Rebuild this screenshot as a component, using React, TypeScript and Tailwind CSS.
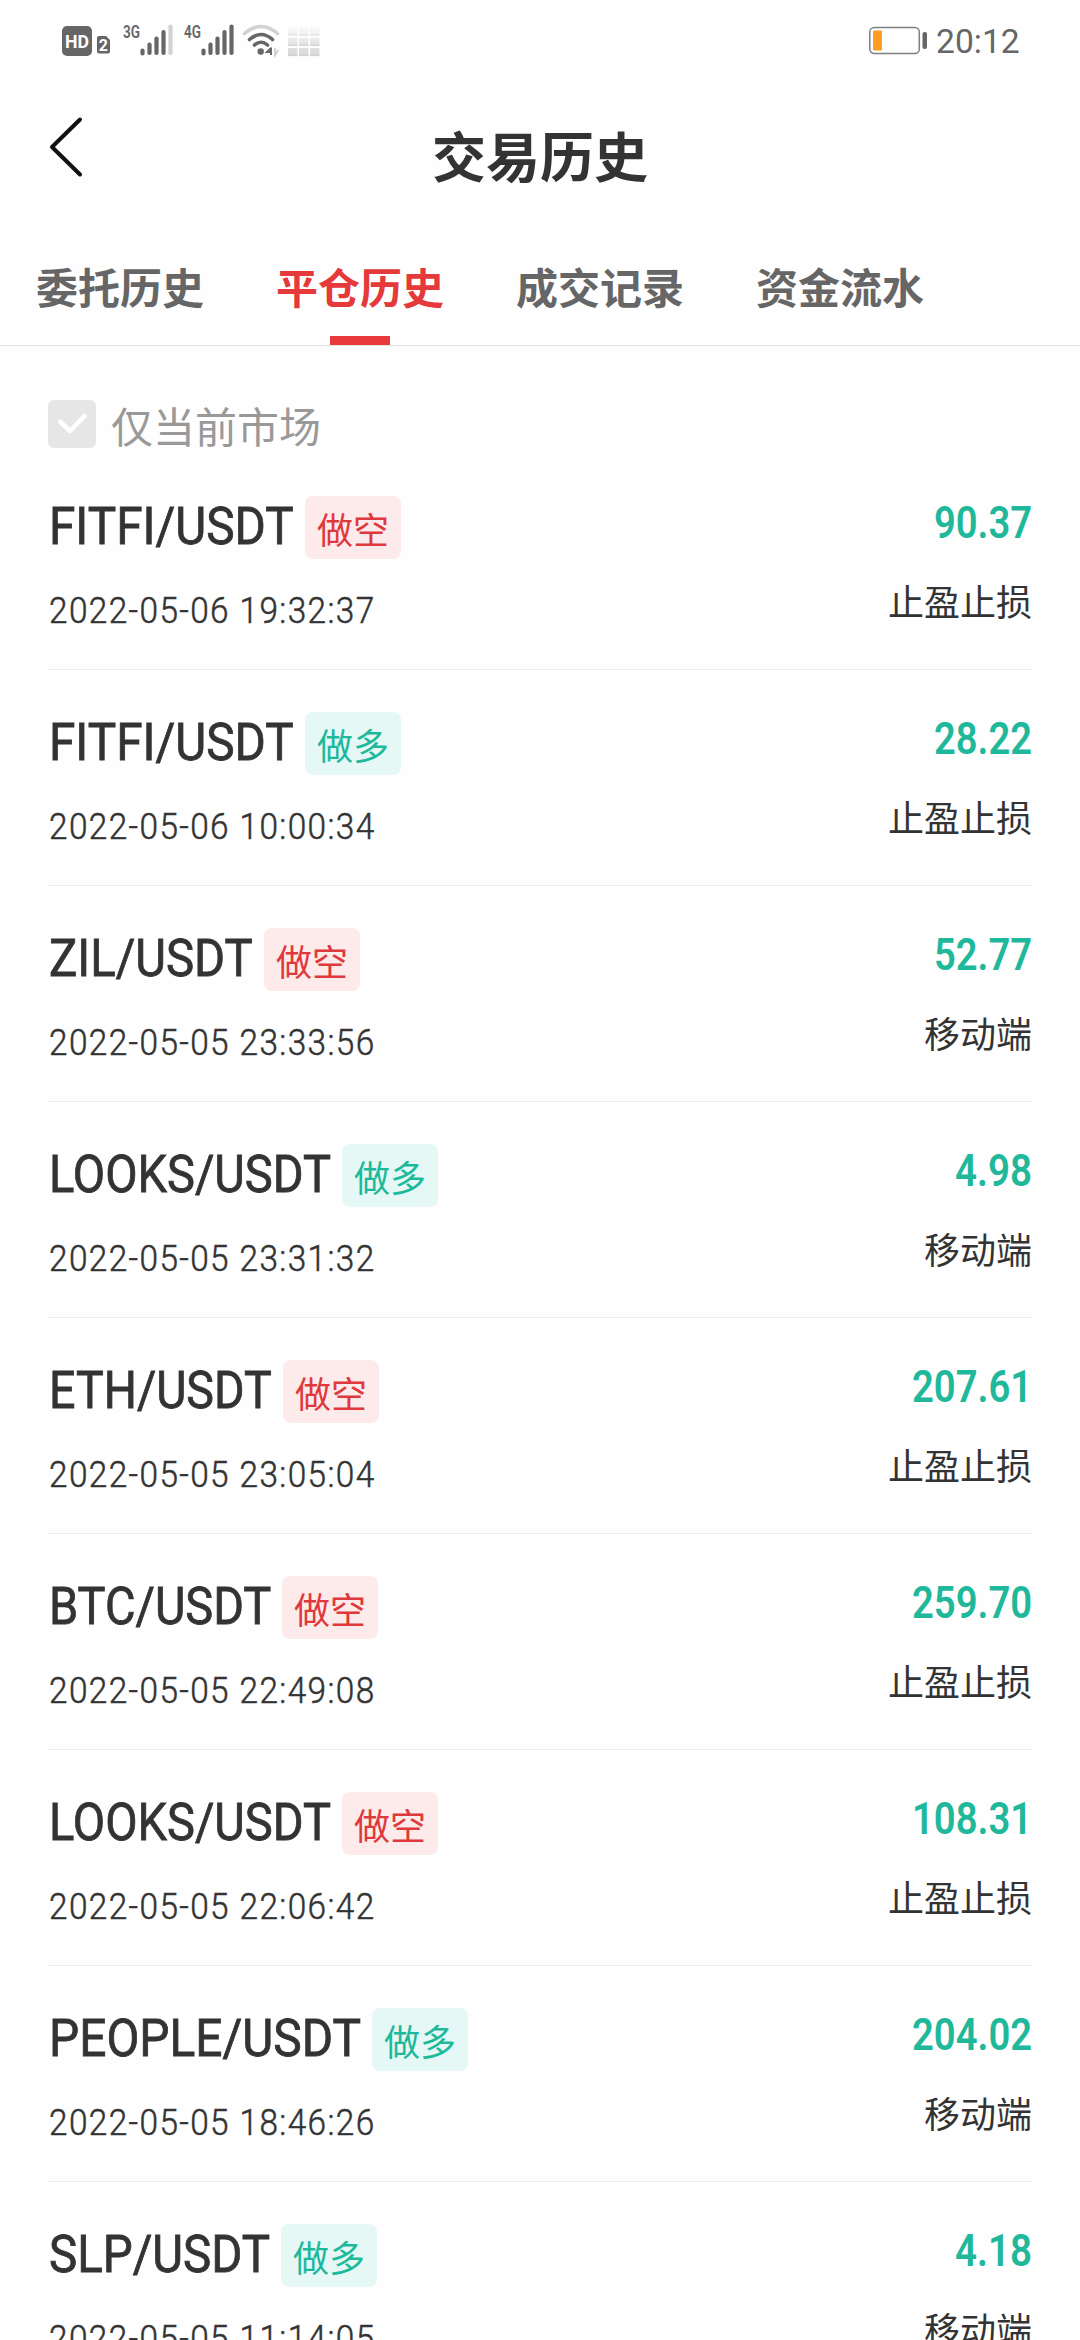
import { useLayoutEffect, useRef, useState } from "react";

type Side = "short" | "long";

interface Trade {
  pair: string;
  pairWidth: number;
  side: Side;
  time: string;
  amount: string;
  amountWidth: number;
  source: string;
}

const TRADES: Trade[] = [
  { pair: "FITFI/USDT", pairWidth: 245, side: "short", time: "2022-05-06 19:32:37", amount: "90.37", amountWidth: 98, source: "止盈止损" },
  { pair: "FITFI/USDT", pairWidth: 245, side: "long", time: "2022-05-06 10:00:34", amount: "28.22", amountWidth: 98, source: "止盈止损" },
  { pair: "ZIL/USDT", pairWidth: 204, side: "short", time: "2022-05-05 23:33:56", amount: "52.77", amountWidth: 98, source: "移动端" },
  { pair: "LOOKS/USDT", pairWidth: 282, side: "long", time: "2022-05-05 23:31:32", amount: "4.98", amountWidth: 77, source: "移动端" },
  { pair: "ETH/USDT", pairWidth: 223, side: "short", time: "2022-05-05 23:05:04", amount: "207.61", amountWidth: 120, source: "止盈止损" },
  { pair: "BTC/USDT", pairWidth: 222, side: "short", time: "2022-05-05 22:49:08", amount: "259.70", amountWidth: 120, source: "止盈止损" },
  { pair: "LOOKS/USDT", pairWidth: 282, side: "short", time: "2022-05-05 22:06:42", amount: "108.31", amountWidth: 120, source: "止盈止损" },
  { pair: "PEOPLE/USDT", pairWidth: 312, side: "long", time: "2022-05-05 18:46:26", amount: "204.02", amountWidth: 120, source: "移动端" },
  { pair: "SLP/USDT", pairWidth: 221, side: "long", time: "2022-05-05 11:14:05", amount: "4.18", amountWidth: 77, source: "移动端" },
];

const TABS = ["委托历史", "平仓历史", "成交记录", "资金流水"];

/** Condenses one line of text horizontally so that it fills the given width. */
function Condensed({ text, width, className }: { text: string; width: number; className: string }) {
  const ref = useRef<HTMLSpanElement>(null);
  const [scale, setScale] = useState(1);
  useLayoutEffect(() => {
    if (ref.current) setScale(width / ref.current.offsetWidth);
  }, [text, width]);
  return (
    <div className={className} style={{ width }}>
      <span ref={ref} className="inline-block origin-left whitespace-nowrap" style={{ transform: `scaleX(${scale})` }}>
        {text}
      </span>
    </div>
  );
}

function Signal({ label, weak }: { label: string; weak?: boolean }) {
  const tops = [50.5, 44.5, 38.5, 32, 26.5];
  return (
    <svg width="52" height="60" viewBox="0 0 52 60" className="shrink-0">
      <text x="0" y="38" fontSize="19" fontWeight="600" fill="#666" textLength="17" lengthAdjust="spacingAndGlyphs">
        {label}
      </text>
      {tops.map((y, i) => (
        <line
          key={y}
          x1={19.5 + i * 7}
          x2={19.5 + i * 7}
          y1={y}
          y2={i === 0 ? 53.5 : 53}
          stroke={weak && i === 4 ? "#d2d2d2" : "#666"}
          strokeWidth="4.2"
          strokeLinecap="round"
        />
      ))}
    </svg>
  );
}

function StatusBar() {
  return (
    <div className="flex h-20 shrink-0 items-start pl-[62px] pr-[60px]">
      <svg width="61" height="60" viewBox="0 0 61 60" className="shrink-0">
        <rect x="0" y="26" width="30" height="30" rx="5" fill="#666" />
        <text x="3" y="48" fontSize="19" fontWeight="700" fill="#fff" textLength="24" lengthAdjust="spacingAndGlyphs">
          HD
        </text>
        <path d="M37 36h7l4 4v11.500q0 2-2 2h-9q-2 0-2-2v-13.500q0-2 2-2z" fill="#666" />
        <text x="36.800" y="51" fontSize="16" fontWeight="700" fill="#fff">
          2
        </text>
      </svg>
      <Signal label="3G" weak />
      <div className="w-[9px]" />
      <Signal label="4G" />
      <svg width="50" height="60" viewBox="236 0 50 60" className="shrink-0" fill="none" strokeLinecap="round">
        <path d="M244.500 33.500Q261 19.500 277.500 33.500" stroke="#d2d2d2" strokeWidth="3.600" />
        <path d="M249.500 39.500Q261 29.500 272.500 39.500" stroke="#666" strokeWidth="3.600" />
        <path d="M254.500 45Q261 39.500 267.500 45" stroke="#666" strokeWidth="3.600" />
        <circle cx="260.700" cy="51.500" r="3.200" fill="#666" />
        <path d="M271 47.500V55M271 48l-4 4h5" stroke="#666" strokeWidth="2" strokeLinecap="butt" />
        <path d="M275 48v7l3.500-5" stroke="#d2d2d2" strokeWidth="2" strokeLinecap="butt" />
      </svg>
      <svg width="34" height="60" viewBox="0 0 34 60" className="ml-[2px] shrink-0">
        <defs>
          <linearGradient id="keys" x1="0" y1="27" x2="0" y2="56" gradientUnits="userSpaceOnUse">
            <stop offset="0" stopColor="#f9f9f9" />
            <stop offset="1" stopColor="#d6d6d6" />
          </linearGradient>
        </defs>
        {[0, 1, 2].map((r) =>
          [0, 1, 2].map((c) => (
            <g key={`${r}-${c}`}>
              <rect x={c * 11} y={27.5 + r * 10.3} width="9.5" height="8" rx="1" fill="url(#keys)" />
              <rect x={c * 11} y={34.4 + r * 10.3} width="9.5" height="1.1" fill={r === 0 ? "#e0e0e0" : "#cfcfcf"} />
            </g>
          )),
        )}
      </svg>
      <div className="flex-1" />
      <svg width="60" height="60" viewBox="0 0 60 60" className="shrink-0">
        <rect x="0.800" y="27.500" width="49.500" height="26" rx="4.500" fill="none" stroke="#808080" strokeWidth="1.500" />
        <rect x="4" y="30.500" width="9" height="20" rx="1" fill="#ff9d1c" />
        <rect x="53.500" y="32" width="4.500" height="17" rx="2" fill="#666" />
      </svg>
      <Condensed text="20:12" width={84} className="ml-[7px] mt-[11px] text-[34px] leading-[60px] text-[#666]" />
    </div>
  );
}

function TitleBar() {
  return (
    <div className="grid h-[148px] shrink-0 grid-cols-3 items-center">
      <svg width="40" height="66" viewBox="0 0 40 66" className="mb-[14px] ml-[46px]" fill="none">
        <path d="M34 5.500 6 33 34 60.500" stroke="#111" strokeWidth="4" strokeLinecap="round" strokeLinejoin="round" />
      </svg>
      <h1 className="pt-[2px] text-center font-['Noto_Sans_CJK_SC',sans-serif] text-[54px] font-bold leading-[80px] text-[#333]">
        交易历史
      </h1>
    </div>
  );
}

function Tabs() {
  return (
    <div className="flex h-[118px] shrink-0 border-b border-[#dfe1e2] pt-7 font-['Noto_Sans_CJK_SC',sans-serif]">
      {TABS.map((tab) => {
        const active = tab === "平仓历史";
        return (
          <div key={tab} className="flex w-60 flex-col items-center">
            <span className={`text-[42px] font-bold leading-[60px] ${active ? "text-[#e5393c]" : "text-[#666]"}`}>{tab}</span>
            {active && <span className="mt-5 h-[9px] w-[60px] bg-[#e8393c]" />}
          </div>
        );
      })}
    </div>
  );
}

function MarketFilter() {
  return (
    <div className="flex h-[108px] shrink-0 items-start pl-12 pt-[54px]">
      <div className="flex h-12 items-center gap-[15px]">
        <span className="flex size-12 items-center justify-center rounded-[6px] bg-[#e6e6e6]">
          <svg width="48" height="48" viewBox="0 0 48 48" fill="none">
            <path d="M12.500 22 22 31 36.500 16" stroke="#fff" strokeWidth="4.500" strokeLinecap="round" strokeLinejoin="round" />
          </svg>
        </span>
        <span className="pt-[2px] font-['Noto_Sans_CJK_SC',sans-serif] text-[42px] leading-[48px] text-[#999]">仅当前市场</span>
      </div>
    </div>
  );
}

function TradeRow({ trade }: { trade: Trade }) {
  const short = trade.side === "short";
  return (
    <li className="flex h-[216px] shrink-0 justify-between border-b border-[#ebebeb]">
      <div className="pt-[42px]">
        <div className="flex h-[63px] items-start gap-[11px] pl-px">
          <Condensed
            text={trade.pair}
            width={trade.pairWidth}
            className="text-[52px] leading-[62px] text-[#333] [-webkit-text-stroke:0.8px_#333]"
          />
          <span
            className={`h-[63px] w-24 rounded-[8px] text-center font-['Noto_Sans_CJK_SC',sans-serif] text-[36px] leading-[65px] ${
              short ? "bg-[#fdebeb] text-[#e0393d]" : "bg-[#e6f8f6] text-[#1db99b]"
            }`}
          >
            {short ? "做空" : "做多"}
          </span>
        </div>
        <Condensed
          text={trade.time}
          width={327}
          className="ml-px mt-[22px] text-[36px] font-light leading-[60px] tracking-[1.5px] text-[#333] [-webkit-text-stroke:0.5px_#333]"
        />
      </div>
      <div className="flex flex-col items-end pt-[39px]">
        <Condensed
          text={trade.amount}
          width={trade.amountWidth}
          className="ml-px text-[44px] font-semibold leading-[60px] text-[#1fb89b]"
        />
        <span className="mt-[17px] font-['Noto_Sans_CJK_SC',sans-serif] text-[36px] leading-[60px] text-[#333]">{trade.source}</span>
      </div>
    </li>
  );
}

export default function App() {
  return (
    <div className="flex h-[2340px] w-[1080px] flex-col overflow-hidden bg-[#fefefe] font-[Roboto,'Noto_Sans_CJK_SC',sans-serif]">
      <StatusBar />
      <TitleBar />
      <Tabs />
      <MarketFilter />
      <ul className="flex flex-col px-12">
        {TRADES.map((trade) => (
          <TradeRow key={trade.time} trade={trade} />
        ))}
      </ul>
    </div>
  );
}
